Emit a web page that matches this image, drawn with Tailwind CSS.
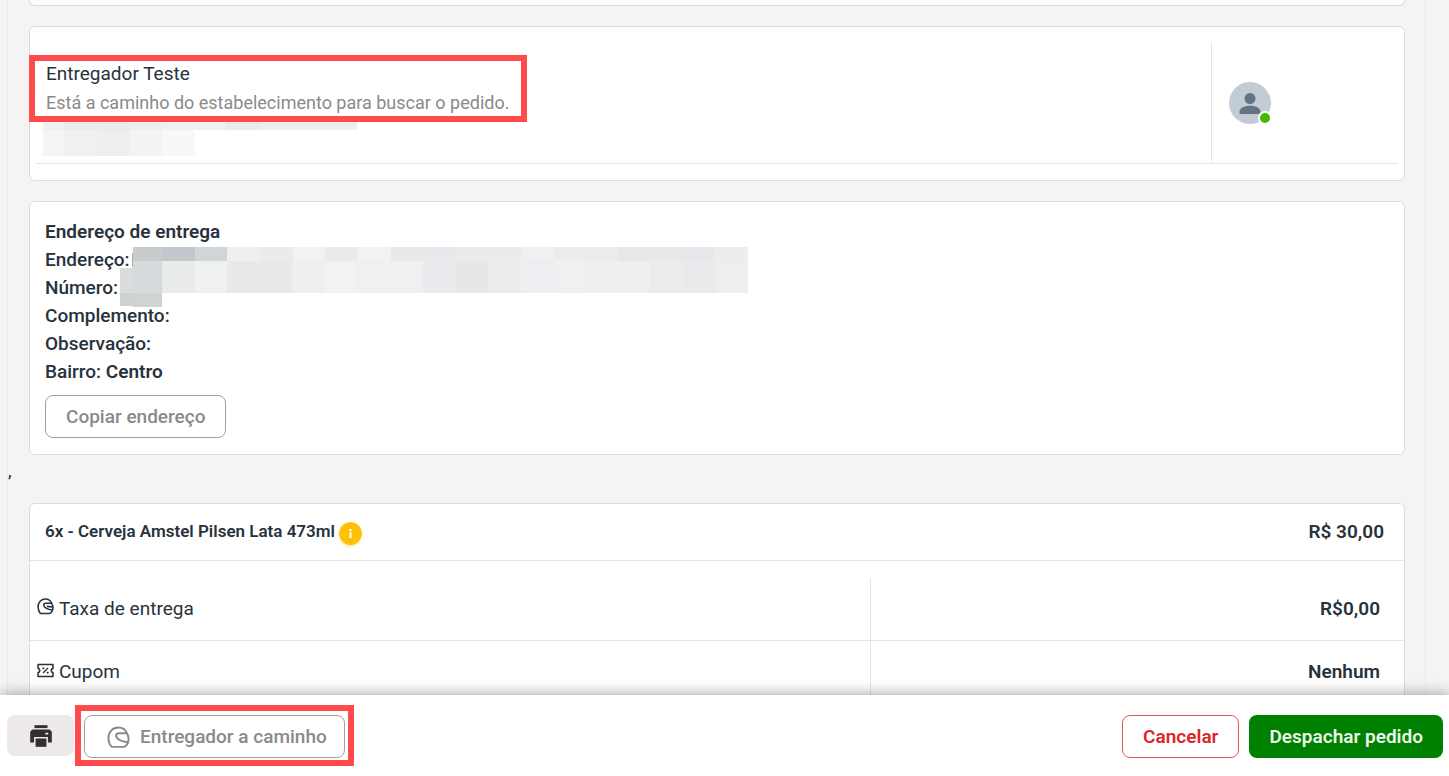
<!DOCTYPE html>
<html lang="pt-BR">
<head>
    <meta charset="UTF-8">
    <meta name="viewport" content="width=device-width, initial-scale=1.0">
    <title>Detalhes do pedido</title>
    <script src="https://cdn.jsdelivr.net/npm/@tailwindcss/browser@4"></script>
</head>
<body class="flex h-screen flex-col overflow-hidden bg-[#f4f4f4] font-['Roboto',sans-serif] text-[19px] text-[#28323c]">
    <!-- Order details -->
    <main class="min-h-0 flex-1 overflow-hidden pr-[23px] pl-[7px]">
        <div class="relative flex h-full flex-col border-x border-[#eaeaea] pr-5 pl-[21px]">
            <section class="h-1.5 shrink-0 rounded-b-md border border-t-0 border-[#dcdcdc] bg-white"></section>

            <!-- Courier -->
            <section class="relative mt-5 shrink-0 rounded-md border border-[#dcdcdc] bg-white px-1.5 pt-[15px] pb-4">
                <div class="flex h-[122px] border-b border-[#e4e4e4]">
                    <div class="flex-1 pt-[17px] pl-[10px]">
                        <p class="leading-[29px]">Entregador Teste</p>
                        <p class="text-lg leading-[29px] text-[#8a8a8a]">Está a caminho do estabelecimento para buscar o pedido.</p>
                    </div>
                    <div class="flex w-[187px] items-center border-l border-[#e4e4e4] pl-[17px]">
                        <div class="relative size-[42px]">
                            <svg class="size-[42px]" viewBox="0 0 42 42" role="img" aria-label="Entregador online">
                                <circle cx="21" cy="21" r="21" fill="#c3cbd5"/>
                                <circle cx="21" cy="16.5" r="5.5" fill="#647382"/>
                                <path d="M10.5 32v-2.2c0-4 5.500-6 10.500-6s10.500 2 10.500 6V32z" fill="#647382"/>
                            </svg>
                            <span class="absolute -right-px -bottom-px size-[14px] rounded-full border-2 border-white bg-[#44b700]"></span>
                        </div>
                    </div>
                </div>
                <!-- Hidden phone and plate -->
                <div class="absolute top-[95px] left-[13px]">
                    <div class="flex h-2">
                        <span class="w-[21px] bg-[#f0f0f0]"></span>
                        <span class="w-[65px] bg-[#ebebeb]"></span>
                        <span class="w-[33px] bg-[#eeeeee]"></span>
                        <span class="w-16 bg-[#f0f0f0]"></span>
                        <span class="w-[33px] bg-[#eaeaea]"></span>
                        <span class="w-16 bg-[#eeeeee]"></span>
                        <span class="w-[34px] bg-[#efeeec]"></span>
                    </div>
                    <div class="flex h-[26px]">
                        <span class="w-[21px] bg-[#f5f5f5]"></span>
                        <span class="w-[33px] bg-[#f0f0f0]"></span>
                        <span class="w-8 bg-[#eeeeee]"></span>
                        <span class="w-[33px] bg-[#f3f3f3]"></span>
                        <span class="w-[33px] bg-[#f8f8f8]"></span>
                    </div>
                </div>
                <div class="absolute top-7 -left-px h-[67px] w-[498px] border-6 border-[#ff4b4b]"></div>
            </section>

            <!-- Delivery address -->
            <section class="relative mt-5 shrink-0 rounded-md border border-[#dcdcdc] bg-white px-[15px] py-4">
                <h2 class="leading-7 font-semibold">Endereço de entrega</h2>
                <div class="leading-7 font-medium">
                    <p>Endereço:</p>
                    <p>Número:</p>
                    <p>Complemento:</p>
                    <p>Observação:</p>
                    <p>Bairro: <b class="font-semibold">Centro</b></p>
                </div>
                <button type="button" class="mt-[9px] h-[43px] rounded-lg border border-[#a0a0a0] px-5 pt-0.5 font-medium text-[#8a8a8a]">Copiar endereço</button>
                <!-- Hidden street and number -->
                <div class="absolute top-[45px] left-[103px]">
                    <div class="flex h-[14px]">
                        <span class="w-[29px] bg-[#c9cccd]"></span>
                        <span class="w-[33px] bg-[#c4c8cc]"></span>
                        <span class="w-8 bg-[#d2d5d7]"></span>
                        <span class="w-[33px] bg-[#efefef]"></span>
                        <span class="w-[33px] bg-[#ebebec]"></span>
                        <span class="w-8 bg-[#f2f2f2]"></span>
                        <span class="w-[33px] bg-[#e9ebea]"></span>
                        <span class="w-[33px] bg-[#f2f2f2]"></span>
                        <span class="w-[33px] bg-[#e9e9e9]"></span>
                        <span class="w-8 bg-[#e8e9ec]"></span>
                        <span class="w-[65px] bg-[#ebebeb]"></span>
                        <span class="w-[33px] bg-[#eff1f0]"></span>
                        <span class="w-16 bg-[#ebedec]"></span>
                        <span class="w-[65px] bg-[#e7e9e8]"></span>
                        <span class="w-8 bg-[#e7e8eb]"></span>
                        <span class="w-[33px] bg-[#ecedec]"></span>
                    </div>
                    <div class="flex h-8">
                        <span class="w-[29px] bg-[#d7dadc]"></span>
                        <span class="w-[33px] bg-[#e9eaea]"></span>
                        <span class="w-8 bg-[#eff0f0]"></span>
                        <span class="w-[65px] bg-[#e8eaea]"></span>
                        <span class="w-[33px] bg-[#eeefef]"></span>
                        <span class="w-8 bg-[#f1f2f2]"></span>
                        <span class="w-[66px] bg-[#eff0f0]"></span>
                        <span class="w-[33px] bg-[#e9eaed]"></span>
                        <span class="w-8 bg-[#e6e8e7]"></span>
                        <span class="w-[33px] bg-[#ebedec]"></span>
                        <span class="w-[33px] bg-[#edeef2]"></span>
                        <span class="w-8 bg-[#f0f0f0]"></span>
                        <span class="w-16 bg-[#eef0ef]"></span>
                        <span class="w-[33px] bg-[#ebedec]"></span>
                        <span class="w-[33px] bg-[#e9eaec]"></span>
                        <span class="w-8 bg-[#eeeeee]"></span>
                    </div>
                    <span class="absolute top-[46px] left-0 h-[14px] w-[29px] bg-[#d0d3d2]"></span>
                    <span class="absolute top-[21px] -left-[13px] h-[25px] w-[13px] bg-[#dadcdd]"></span>
                    <span class="absolute top-[46px] -left-[13px] h-[13px] w-[13px] bg-[#cfd1d2]"></span>
                    <span class="absolute top-[6px] -left-px h-[14px] w-px bg-[#b5a98f]"></span>
                </div>
            </section>

            <span class="absolute top-[462px] left-0 text-base leading-5 font-medium">,</span>

            <!-- Items and totals -->
            <section class="mt-12 shrink-0 rounded-md border border-[#dcdcdc] bg-white">
                <div class="flex h-[57px] items-center border-b border-[#e4e4e4] pr-5 pl-[15px] font-semibold">
                    <span class="text-[17px]">6x - Cerveja Amstel Pilsen Lata 473ml</span>
                    <svg class="mt-0.5 ml-1 size-[23px] rounded-full shadow-sm shadow-[#ffc107]/40" viewBox="0 0 23 23" role="img" aria-label="Informações">
                        <circle cx="11.5" cy="11.500" r="11.500" fill="#ffc107"/>
                        <path d="M10.500 7h2v2h-2zM10.500 10.300h2V16h-2z" fill="#fff"/>
                    </svg>
                    <span class="ml-auto">R$ 30,00</span>
                </div>
                <table class="mt-[17px] w-full">
                    <tbody>
                        <tr class="h-[62px] border-b border-[#e4e4e4]">
                            <th scope="row" class="w-[61.2%] border-r border-[#e4e4e4] pl-[7px] text-left font-normal">
                                <span class="flex items-center gap-[5px]">
                                    <svg class="mb-1 size-[17px]" viewBox="0 0 24 24" fill="none" stroke="currentColor" stroke-width="2.200" stroke-linejoin="round" aria-hidden="true">
                                        <path d="M20.800 7.500C19.200 3.600 16.200 1.500 12 1.500 6 1.500 1.500 6 1.500 12.500c0 3.800 1.300 7 3.300 9.300h13.400c2.600-1.500 4.300-4.800 4.300-8.800 0-1.800-.6-3.600-1.700-5.500z"/>
                                        <path d="M20.800 7.500h-8c-2.300 0-3.300 1-3.300 2.300 0 3.200 4.500 6.700 12.300 7.200M14 11.800l8.300 1"/>
                                    </svg>
                                    Taxa de entrega
                                </span>
                            </th>
                            <td class="pr-6 text-right font-semibold">R$0,00</td>
                        </tr>
                        <tr class="h-16">
                            <th scope="row" class="border-r border-[#e4e4e4] pl-[7px] text-left font-normal">
                                <span class="flex items-center gap-[5px]">
                                    <svg class="mb-1 size-[17px]" viewBox="0 0 24 24" fill="none" stroke="currentColor" stroke-width="2.200" stroke-linejoin="round" aria-hidden="true">
                                        <path d="M1.500 3.500h21v5.500c-1.700.4-2.500 1.500-2.500 3s.8 2.600 2.500 3v5.500h-21V15c1.700-.4 2.500-1.500 2.500-3s-.8-2.600-2.500-3z"/>
                                        <path d="M8.500 15.500l7-7" stroke-width="1.700"/>
                                        <path d="M7.700 7.700h2.600v2.600H7.700zM13.700 13.700h2.600v2.600h-2.600z" fill="currentColor" stroke="none"/>
                                    </svg>
                                    Cupom
                                </span>
                            </th>
                            <td class="pr-6 text-right font-semibold">Nenhum</td>
                        </tr>
                    </tbody>
                </table>
            </section>
        </div>
    </main>

    <!-- Actions -->
    <footer class="relative flex h-[81px] shrink-0 items-start bg-white pt-5 pr-1.5 pl-[7px] shadow-[0_0_14px_rgba(0,0,0,0.4)]">
        <button type="button" aria-label="Imprimir" class="flex h-[41px] w-[67px] items-center justify-center rounded-lg bg-[#ede9e9] text-[#332f2f]">
            <svg class="size-[26px]" viewBox="0 0 24 24" fill="currentColor" aria-hidden="true">
                <path d="M6 2h12v2.700H6z"/>
                <path d="M5 6h14c1.700 0 3 1.300 3 3v9H2V9c0-1.700 1.300-3 3-3z"/>
                <path d="M16 9h2.600v1.700H16zM5.600 13h12.800v5.500H5.600z" fill="#ede9e9"/>
                <path d="M7 14.300h10V22H7z"/>
            </svg>
        </button>
        <div class="relative ml-[10px]">
            <button type="button" class="flex h-[43px] items-center gap-[10px] rounded-lg border border-[#a0a0a0] pt-0.5 pr-[17px] pl-[22px] font-medium text-[#8a8a8a]">
                <svg class="size-[23px]" viewBox="0 0 24 24" fill="none" stroke="currentColor" stroke-width="2" stroke-linejoin="round" aria-hidden="true">
                    <path d="M20.800 7.500C19.200 3.600 16.200 1.500 12 1.500 6 1.500 1.500 6 1.500 12.500c0 3.800 1.300 7 3.300 9.300h13.400c2.600-1.500 4.300-4.800 4.300-8.800 0-1.800-.6-3.600-1.700-5.500z"/>
                    <path d="M20.800 7.500h-8c-2.300 0-3.300 1-3.300 2.300 0 3.200 4.500 6.700 12.300 7.200"/>
                </svg>
                Entregador a caminho
            </button>
            <div class="pointer-events-none absolute -inset-x-[9px] -top-[10px] -bottom-2 border-6 border-[#ff4b4b]"></div>
        </div>
        <div class="ml-auto flex gap-[10px] font-semibold">
            <button type="button" class="h-[43px] rounded-lg border border-[#e05a5a] px-5 pt-0.5 text-[#dc2626]">Cancelar</button>
            <button type="button" class="h-[43px] rounded-lg bg-[#008000] px-5 pt-0.5 text-[#eaf7ea]">Despachar pedido</button>
        </div>
    </footer>
</body>
</html>
